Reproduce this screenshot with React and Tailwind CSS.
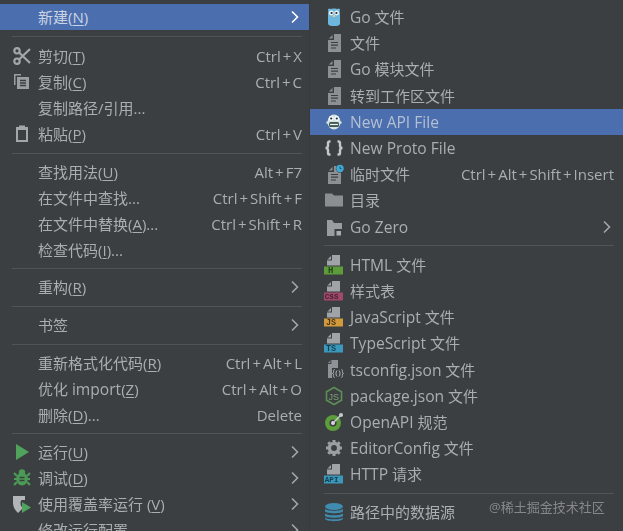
import React from "react";

const FONT = '"Open Sans","Noto Sans CJK SC",sans-serif';

const Doc = ({ x = 3, y = 0 }) => (
  <g transform={`translate(${x} ${y})`}>
    <path d="M5.5 0H13V18H0V5.5Z" fill="#8c9094" />
    <path d="M4.5 0V4.5H0V6H6V0Z" fill="#3c3f41" />
    <path d="M3 8.5H10M3 11.2H10M3 14H8" stroke="#3c3f41" strokeWidth="1.2" />
  </g>
);

const Shell = ({ children }) => (
  <svg width="20" height="20" viewBox="0 0 20 20" className="block">
    {children}
  </svg>
);

const Small = () => (
  <g>
    <path d="M8 0H16V10.5H3V5Z" fill="#a0a4a8" />
    <path d="M7 0V4.5H3V5.5H8V0Z" fill="#3c3f41" />
  </g>
);

const Banner = ({ c, t, tc, size = 8, x = 1 }) => (
  <Shell>
    <Small />
    <rect x="0" y="11.5" width="19" height="8" fill={c} />
    <text x={x} y="18.4" fontSize={size} fontWeight="700" fill={tc} fontFamily='"Liberation Mono",monospace'>
      {t}
    </text>
  </Shell>
);

const GoIcon = () => (
  <Shell>
    <circle cx="5.5" cy="3" r="1.6" fill="#6db7dd" />
    <circle cx="14.5" cy="3" r="1.6" fill="#6db7dd" />
    <path d="M4 7C4 2.5 7 1.5 10 1.5S16 2.5 16 7V16C16 19 13 19 10 19S4 19 4 16Z" fill="#6db7dd" />
    <circle cx="7.3" cy="6" r="2.4" fill="#eef4f6" />
    <circle cx="12.7" cy="6" r="2.4" fill="#eef4f6" />
    <circle cx="7.6" cy="6" r="1.1" fill="#223" />
    <circle cx="12.4" cy="6" r="1.1" fill="#223" />
    <rect x="8.8" y="8" width="2.4" height="2" fill="#d9c9a8" />
  </Shell>
);

const ApiGo = () => (
  <Shell>
    <circle cx="3.8" cy="10.5" r="1.5" fill="#c8d8d8" />
    <circle cx="16.2" cy="10.5" r="1.5" fill="#c8d8d8" />
    <ellipse cx="10" cy="10" rx="6.5" ry="7.5" fill="#d5e3e3" />
    <circle cx="7.2" cy="6.5" r="2.4" fill="#f6f9f9" />
    <circle cx="12.8" cy="6.5" r="2.4" fill="#f6f9f9" />
    <circle cx="7.2" cy="6.5" r="1.1" fill="#1f2c38" />
    <circle cx="12.8" cy="6.5" r="1.1" fill="#1f2c38" />
    <rect x="5" y="10" width="10" height="5" rx="1.6" fill="#3f5a55" />
    <path d="M6 12.5H14" stroke="#eef3ee" strokeWidth="1.2" />
  </Shell>
);

const icons = {
  cut: (
    <Shell>
      <g fill="none" stroke="#a3a7ab" strokeWidth="2.2">
        <circle cx="5" cy="4.8" r="2.7" />
        <circle cx="5" cy="15.2" r="2.7" />
        <path d="M7 6.5L18 17M7 13.5L18 3" />
      </g>
    </Shell>
  ),
  copy: (
    <Shell>
      <path d="M2 2H9V3.5H3.5V13H2Z" fill="#9a9ea2" />
      <path d="M5 5H17V17H5Z" fill="#9a9ea2" />
      <path d="M8 8.5H14M8 11H14M8 13.5H14" stroke="#3c3f41" strokeWidth="1.3" />
    </Shell>
  ),
  paste: (
    <Shell>
      <path d="M4 3H16V18H4Z" fill="#a3a7ab" />
      <rect x="6" y="6" width="8" height="10" fill="#3c3f41" />
      <rect x="7" y="1.5" width="6" height="3.5" fill="#a3a7ab" />
    </Shell>
  ),
  run: (
    <Shell>
      <path d="M4 2L17 10L4 18Z" fill="#4fa35c" />
    </Shell>
  ),
  debug: (
    <Shell>
      <ellipse cx="10" cy="11" rx="5.8" ry="6.5" fill="#4b9a55" />
      <circle cx="10" cy="4.5" r="3.2" fill="#4b9a55" />
      <path d="M2 5L5 8M18 5L15 8M2 11H5M18 11H15M2 17L5 14M18 17L15 14" stroke="#4b9a55" strokeWidth="2.2" />
      <path d="M7.5 9.5H12.5M7.5 12.5H12.5" stroke="#3c3f41" strokeWidth="1.5" />
    </Shell>
  ),
  cover: (
    <Shell>
      <path d="M1 2H13V6H10C8 6 8 12 10 13V15L6 19C3 16 1 13 1 9Z" fill="#b3b6b9" />
      <path d="M10 8L19 13.5L10 19Z" fill="#4fa35c" />
    </Shell>
  ),
  go: <GoIcon />,
  doc: (
    <Shell>
      <Doc x={4} y={1} />
    </Shell>
  ),
  api: <ApiGo />,
  proto: (
    <svg width="20" height="20" viewBox="0 0 20 20" className="block">
      <path d="M6.5 3.5H5.2C4.3 3.5 4 4 4 4.8V8C4 9 3.4 9.6 1.8 10C3.4 10.4 4 11 4 12V15.2C4 16 4.3 16.5 5.2 16.5H6.5" fill="none" stroke="#c4c7ca" strokeWidth="2.4" />
      <path d="M13.5 3.5H14.8C15.7 3.5 16 4 16 4.8V8C16 9 16.6 9.6 18.2 10C16.6 10.4 16 11 16 12V15.2C16 16 15.7 16.5 14.8 16.5H13.5" fill="none" stroke="#c4c7ca" strokeWidth="2.4" />
    </svg>
  ),
  scratch: (
    <Shell>
      <Doc x={4} y={2} />
      <circle cx="16" cy="4.5" r="4.2" fill="#3c3f41" />
      <circle cx="16" cy="4.5" r="3.7" fill="#3fa9d6" />
      <path d="M16 2.5V4.7H17.5" stroke="#20495c" strokeWidth="0.9" fill="none" />
    </Shell>
  ),
  folder: (
    <Shell>
      <path d="M1 3.5H8L10 5.5H19V16.5H1Z" fill="#8b8f93" />
    </Shell>
  ),
  gozero: (
    <Shell>
      <path d="M3 3H8L10 6H18V19H3Z" fill="#999da1" />
      <rect x="10.5" y="12" width="8" height="8" fill="#3c3f41" />
      <rect x="12.5" y="14" width="4.5" height="4.5" fill="#a9adb1" />
    </Shell>
  ),
  html: <Banner c="#5d9b3b" t="H" tc="#24481a" size={9} x={4} />,
  css: <Banner c="#a1496d" t="CSS" tc="#43202f" size={7.6} x={0.8} />,
  js: <Banner c="#d19a3c" t="JS" tc="#4a3510" size={8.4} x={2} />,
  ts: <Banner c="#3b98bb" t="TS" tc="#123e50" size={8.4} x={2} />,
  tsc: (
    <Shell>
      <path d="M7 0H14V8H8V18H4V3Z" fill="#8f9397" />
      <path d="M6.4 0V3H4V4H7.4V0Z" fill="#3c3f41" />
      <g fill="none" stroke="#b5b8bb" strokeWidth="1">
        <path d="M10.5 9.5C9.3 9.5 9.8 11 9.5 12.5C9.4 13.2 9 13.5 8.5 13.5C9 13.5 9.4 13.8 9.5 14.5C9.8 16 9.3 17.5 10.5 17.5" />
        <path d="M17.5 9.5C18.7 9.5 18.2 11 18.5 12.5C18.6 13.2 19 13.5 19.5 13.5C19 13.5 18.6 13.8 18.5 14.5C18.2 16 18.7 17.5 17.5 17.5" />
        <path d="M13 10.5C11.6 12 11.6 15 13 16.5M15 10.5C16.4 12 16.4 15 15 16.5" />
      </g>
    </Shell>
  ),
  node: (
    <Shell>
      <path d="M10 1.5L17.5 5.8V14.2L10 18.5L2.5 14.2V5.8Z" fill="none" stroke="#5c8f57" strokeWidth="1.6" />
      <text x="4.6" y="13.6" fontSize="9" fill="#7aa274" fontFamily='"Liberation Sans",sans-serif'>JS</text>
    </Shell>
  ),
  openapi: (
    <Shell>
      <circle cx="9" cy="11" r="8" fill="#5c9d3c" />
      <circle cx="9" cy="11" r="3.6" fill="#3c3f41" />
      <circle cx="9" cy="11" r="2" fill="#d7dadc" />
      <path d="M9 11L17 3" stroke="#c9cccf" strokeWidth="1.4" />
      <circle cx="17" cy="3" r="2" fill="#c9cccf" />
    </Shell>
  ),
  gear: (
    <Shell>
      <circle cx="10" cy="10" r="4.6" fill="none" stroke="#9b9fa3" strokeWidth="3.4" />
      <path d="M10 2V5M10 15V18M2 10H5M15 10H18M4.3 4.3L6.4 6.4M13.6 13.6L15.7 15.7M15.7 4.3L13.6 6.4M6.4 13.6L4.3 15.7" stroke="#9b9fa3" strokeWidth="3" />
    </Shell>
  ),
  http: <Banner c="#3b98bb" t="API" tc="#123e50" size={7.6} x={0.8} />,
  db: (
    <Shell>
      <ellipse cx="10" cy="4.5" rx="9" ry="3.5" fill="#3f8cb0" />
      <path d="M1 6.5C1 9.5 19 9.5 19 6.5V9C19 12 1 12 1 9Z" fill="#3f8cb0" />
      <path d="M1 11C1 14 19 14 19 11V13.5C19 16.5 1 16.5 1 13.5Z" fill="#3f8cb0" />
      <path d="M1 15.3C1 18 19 18 19 15.3V16.5C19 20 1 20 1 16.5Z" fill="#3f8cb0" />
    </Shell>
  ),
};

const Chevron = ({ light }) => (
  <svg width="8" height="14" viewBox="0 0 8 14" className="block">
    <path d="M1 1.5L6.5 7L1 12.5" fill="none" stroke={light ? "#ffffff" : "#a2a6aa"} strokeWidth="1.6" />
  </svg>
);

const M = ({ children }) => <span className="underline underline-offset-2">{children}</span>;
const L = ({ children }) => <span className="text-[15.6px]">{children}</span>;

function Shortcut({ text }) {
  const parts = text.split("+");
  return (
    <>
      {parts.map((p, i) => (
        <React.Fragment key={i}>
          {i > 0 ? <span className="mx-[2px]">+</span> : null}
          {p}
        </React.Fragment>
      ))}
    </>
  );
}

function Row({ icon, label, shortcut, arrow, active, left }) {
  return (
    <div className={`flex shrink-0 items-center ${left ? "h-[26px] pl-[12px] pr-[7px]" : "h-[26.2px] pl-[14px] pr-[9px]"} ${active ? "bg-[#4b6eaf]" : ""}`}>
      <span className="flex w-[20px] shrink-0 items-center justify-center">{icon ? icons[icon] : null}</span>
      <span className="ml-[6px] h-[20px] whitespace-nowrap leading-[20px]">{label}</span>
      <span className="ml-auto flex items-center whitespace-nowrap">
        {shortcut ? <Shortcut text={shortcut} /> : null}
        {arrow ? <span className="mr-[3px] block"><Chevron light={active} /></span> : null}
      </span>
    </div>
  );
}

const Sep = ({ h, ml }) => (
  <div className={`flex ${h} shrink-0 items-center ${ml}`}>
    <div className="h-px w-full bg-[#515456]" />
  </div>
);

export default function App() {
  const lm = "ml-[12px] mr-[7px]";
  const rm = "ml-[14px] mr-[9px]";
  return (
    <div className="h-[531px] w-[623px] overflow-hidden bg-[#3c3f41]">
      <div
        className="relative flex h-[531px] w-[623px] overflow-hidden text-[15px] leading-none text-[#a9aeb3] blur-[0.5px]"
        style={{ fontFamily: FONT }}
      >
        <div className="flex h-[531px] w-[309px] shrink-0 flex-col overflow-hidden pt-[4px]">
          <Row left active arrow label={<span className="text-[#ccd4e2]">新建(<M>N</M>)</span>} />
          <Sep h="h-[13px]" ml={lm} />
          <Row left icon="cut" label={<>剪切(<M>T</M>)</>} shortcut="Ctrl+X" />
          <Row left icon="copy" label={<>复制(<M>C</M>)</>} shortcut="Ctrl+C" />
          <Row left label="复制路径/引用..." />
          <Row left icon="paste" label={<>粘贴(<M>P</M>)</>} shortcut="Ctrl+V" />
          <Sep h="h-[12px]" ml={lm} />
          <Row left label={<>查找用法(<M>U</M>)</>} shortcut="Alt+F7" />
          <Row left label="在文件中查找..." shortcut="Ctrl+Shift+F" />
          <Row left label={<>在文件中替换(<M>A</M>)...</>} shortcut="Ctrl+Shift+R" />
          <Row left label={<>检查代码(<M>I</M>)...</>} />
          <Sep h="h-[11px]" ml={lm} />
          <Row left arrow label={<>重构(<M>R</M>)</>} />
          <Sep h="h-[12px]" ml={lm} />
          <Row left arrow label="书签" />
          <Sep h="h-[12px]" ml={lm} />
          <Row left label={<>重新格式化代码(<M>R</M>)</>} shortcut="Ctrl+Alt+L" />
          <Row left label={<>优化 <L>import</L>(<M>Z</M>)</>} shortcut="Ctrl+Alt+O" />
          <Row left label={<>删除(<M>D</M>)...</>} shortcut="Delete" />
          <Sep h="h-[11px]" ml={lm} />
          <Row left icon="run" arrow label={<>运行(<M>U</M>)</>} />
          <Row left icon="debug" arrow label={<>调试(<M>D</M>)</>} />
          <Row left icon="cover" arrow label={<>使用覆盖率运行 (<M>V</M>)</>} />
          <Row left arrow label="修改运行配置" />
        </div>
        <div className="w-px shrink-0 bg-[#37393b]" />
        <div className="flex h-[531px] flex-1 flex-col overflow-hidden pt-[4px]">
          <Row icon="go" label={<><L>Go</L> 文件</>} />
          <Row icon="doc" label="文件" />
          <Row icon="doc" label={<><L>Go</L> 模块文件</>} />
          <Row icon="doc" label="转到工作区文件" />
          <Row icon="api" active label={<span className="text-[#b4bfd2]"><L>New API File</L></span>} />
          <Row icon="proto" label={<L>New Proto File</L>} />
          <Row icon="scratch" label="临时文件" shortcut="Ctrl+Alt+Shift+Insert" />
          <Row icon="folder" label="目录" />
          <Row icon="gozero" arrow label={<L>Go Zero</L>} />
          <Sep h="h-[12px]" ml={rm} />
          <Row icon="html" label={<><L>HTML</L> 文件</>} />
          <Row icon="css" label="样式表" />
          <Row icon="js" label={<><L>JavaScript</L> 文件</>} />
          <Row icon="ts" label={<><L>TypeScript</L> 文件</>} />
          <Row icon="tsc" label={<><L>tsconfig.json</L> 文件</>} />
          <Row icon="node" label={<><L>package.json</L> 文件</>} />
          <Row icon="openapi" label={<><L>OpenAPI</L> 规范</>} />
          <Row icon="gear" label={<><L>EditorConfig</L> 文件</>} />
          <Row icon="http" label={<><L>HTTP</L> 请求</>} />
          <Sep h="h-[12px]" ml={rm} />
          <Row icon="db" label="路径中的数据源" />
        </div>
        <div className="absolute left-[489px] top-[499px] whitespace-nowrap text-[13px] leading-[16px] text-[#85888b]">@稀土掘金技术社区</div>
      </div>
    </div>
  );
}
